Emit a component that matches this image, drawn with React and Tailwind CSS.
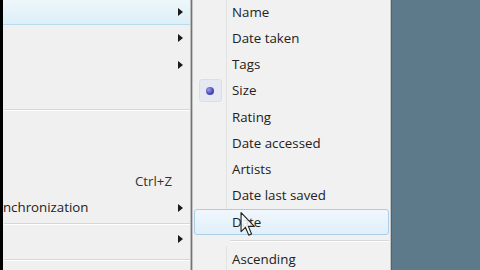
import { useState } from 'react'

const rightItems = [
  'Name',
  'Date taken',
  'Tags',
  'Size',
  'Rating',
  'Date accessed',
  'Artists',
  'Date last saved',
  'Date',
]

function Arrow() {
  return (
    <svg width="5" height="8" viewBox="0 0 5 8" className="shrink-0">
      <path d="M0 0 L5 4 L0 8 Z" fill="#1a1a1a" />
    </svg>
  )
}

function LeftRow({ label, shortcut, arrow, active, shift }) {
  return (
    <div
      className={
        'h-[26.25px] flex items-center pr-[7px] shrink-0 ' +
        (active
          ? 'bg-gradient-to-b from-[#eef7fb] to-[#ddeff7] border-b border-[#b9dcec]'
          : '')
      }
    >
      <span className={'flex-1 whitespace-nowrap pt-[1px] ' + (shift ? 'ml-[-14px]' : 'pl-[30px]')}>
        {label}
      </span>
      {shortcut && <span className="mr-[11px] pt-[1px] text-[#333]">{shortcut}</span>}
      {arrow && <Arrow />}
    </div>
  )
}

function Separator({ h, gutter }) {
  return (
    <div className={'flex flex-col justify-center shrink-0 ' + h + (gutter ? ' pl-[36px]' : ' pl-[1px]')}>
      <div className="h-px bg-[#d7d7d7]" />
      <div className="h-px bg-white" />
    </div>
  )
}

function Cursor() {
  return (
    <svg
      width="16"
      height="24"
      viewBox="0 0 12 19"
      className="absolute left-[240px] top-[212px] pointer-events-none"
    >
      <path
        d="M0.5 0.5 L0.5 15.5 L4 12.2 L6.6 18.3 L8.8 17.4 L6.3 11.4 L11 11.4 Z"
        fill="#fafafa"
        fillOpacity="0.85"
        stroke="#222"
        strokeWidth="0.9"
        strokeLinejoin="round"
      />
    </svg>
  )
}

export default function App() {
  const [hovered] = useState('Date')

  return (
    <div
      className="relative w-[480px] h-[270px] overflow-hidden flex bg-[#5d7a8b] text-[13.3px] text-[#222]"
      style={{ fontFamily: '"Open Sans", "Noto Sans", sans-serif' }}
    >
      {/* black edge */}
      <div className="w-[3px] bg-black shrink-0" />

      {/* parent menu */}
      <div className="w-[188px] shrink-0 bg-[#f0f0f0] border-r border-[#bcbcbc] flex flex-col overflow-hidden -mt-[1px]">
        <LeftRow arrow active />
        <LeftRow arrow />
        <LeftRow arrow />
        <LeftRow />
        <Separator h="h-[12px]" />
        <LeftRow />
        <LeftRow />
        <LeftRow shortcut="Ctrl+Z" />
        <LeftRow label="Synchronization" arrow shift />
        <Separator h="h-[5px]" />
        <LeftRow arrow />
        <Separator h="h-[16px]" />
        <LeftRow />
      </div>

      {/* submenu */}
      <div className="w-[199px] shrink-0 ml-[1px] bg-[#f1f1f1] border-l border-r border-[#c4c4c4] flex flex-col -mt-[1px] px-[1px]">
        {rightItems.map((item) =>
          item === hovered ? (
            <div
              key={item}
              className="h-[26.25px] shrink-0 flex items-center rounded-[3px] border border-[#a9cfe8] bg-gradient-to-b from-[#f0f7fc] to-[#e1eff9]"
            >
              <span className="pl-[37px] pt-[1px]">{item}</span>
            </div>
          ) : (
            <div key={item} className="h-[26.25px] shrink-0 flex items-center">
              <div className="w-[33px] h-full flex items-center justify-center border-r border-[#e2e3e3]">
                {item === 'Size' && (
                  <div className="w-[23px] h-[23px] rounded-[3px] border border-[#d9dee8] bg-[#e6e9f1] flex items-center justify-center">
                    <div className="w-[8px] h-[8px] rounded-full bg-[radial-gradient(circle_at_35%_35%,#9aa0ee,#4248b0_60%,#2c3090)]" />
                  </div>
                )}
              </div>
              <span className="pl-[5px] pt-[1px]">{item}</span>
            </div>
          )
        )}
        <Separator h="h-[11px]" gutter />
        <div className="h-[26.25px] shrink-0 flex items-center">
          <div className="w-[33px] h-full border-r border-[#e2e3e3]" />
          <span className="pl-[5px] pt-[1px]">Ascending</span>
        </div>
      </div>

      {/* desktop */}
      <div className="flex-1 border-l border-[#4a6575]" />

      <Cursor />
    </div>
  )
}
